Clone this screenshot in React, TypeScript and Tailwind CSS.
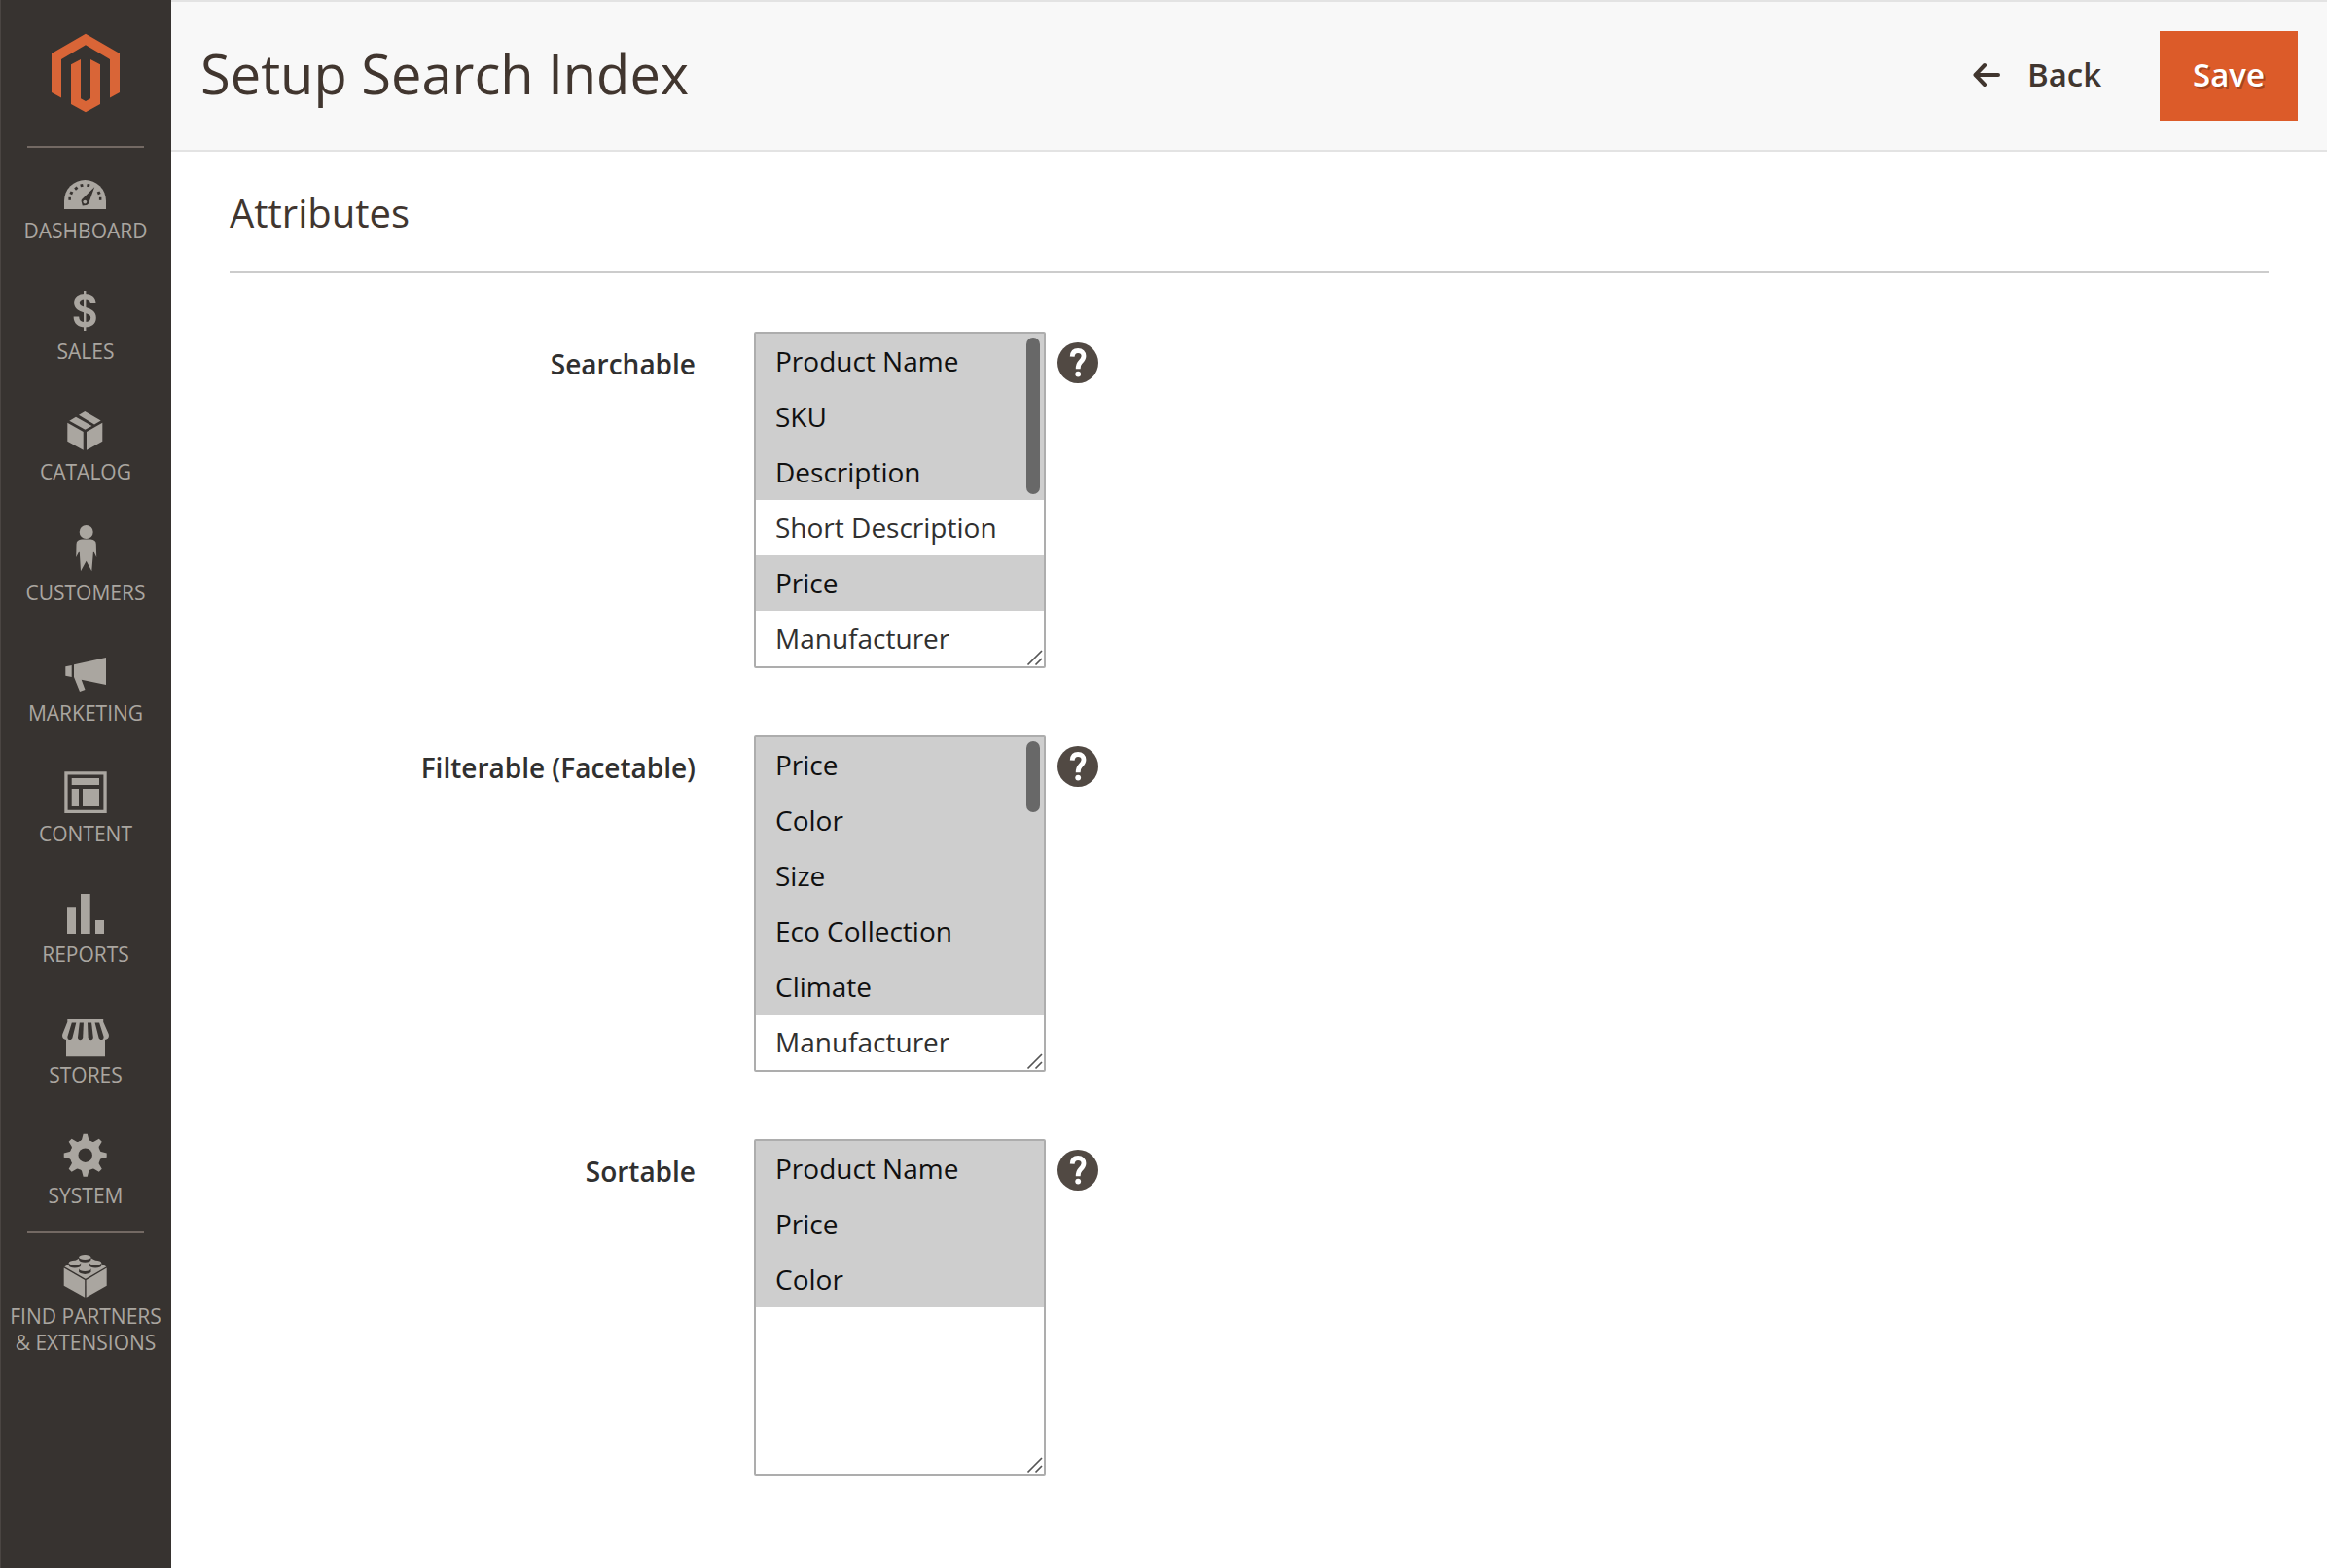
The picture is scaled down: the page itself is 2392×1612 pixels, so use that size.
import React from "react";

type IconProps = { children: React.ReactNode };

function Glyph({ children }: IconProps) {
  return (
    <svg viewBox="0 0 48 52" className="h-[52px] w-12 shrink-0 fill-current" aria-hidden="true">
      {children}
    </svg>
  );
}

const DARK = "#373330";

const dashboardIcon = (
  <Glyph>
    <path d="M2 47V38.5a21.5 21.5 0 0 1 43 0V47z" />
    <g fill={DARK}>
      <path d="M6.4 34.8h2.5v3h-2.5z" />
      <path d="M8.6 28.4l2.7 1.2-1.2 2.6-2.7-1.2z" />
      <path d="M14.6 23.6l1.8 2.2-2.4 1.9-1.8-2.2z" />
      <path d="M18.3 21.6l2.8-.6.6 2.7-2.8.6z" />
      <path d="M25.7 21l2.8.6-.6 2.7-2.8-.6z" />
      <path d="M38.4 28.4l-2.7 1.2 1.2 2.6 2.7-1.2z" />
      <path d="M37.9 34.8h2.5v3h-2.5z" />
      <path d="M33.2 24.2L20.6 36.4c-1.2 1.2-1.2 2.2-.8 3.4l1 3.6 3.6-.4c1.4-.2 2.2-.8 2.8-2.2z" />
    </g>
    <circle cx="23.3" cy="39.6" r="1.9" />
  </Glyph>
);

const salesIcon = (
  <Glyph>
    <path d="M22 7h2.4v41H22z" />
    <path
      d="M31.7 20c0-5-3.4-7.3-8.5-7.3s-8.3 2.6-8.3 6.6c0 4.7 3.8 6 8.4 7.4 5 1.5 8.7 3.1 8.7 8 0 4.6-3.7 7.1-8.7 7.1-5.3 0-8.9-2.8-8.9-8.3"
      fill="none"
      stroke="currentColor"
      strokeWidth="5.6"
    />
  </Glyph>
);

const catalogIcon = (
  <Glyph>
    <path d="M5.3 18.7l16.4 9.3v18.7L5.3 37.7z" />
    <path d="M41.3 18.7L25 28v18.7l16.3-9z" />
    <path d="M7.3 16.7l6.7-4 16.5 9.2-7 3.9z" />
    <path d="M17 10.8L23.3 7l16.4 9.6-6.7 3.8z" />
  </Glyph>
);

const customersIcon = (
  <Glyph>
    <circle cx="24.7" cy="7" r="7" />
    <path d="M14.2 33l.3-13.5q.2-4.6 5.5-4.9h9.3q5.3.3 5.5 4.9L35.2 33 32 26.3l-1.7 21-5.6-10.6L19 47.3l-1.3-21z" />
  </Glyph>
);

const marketingIcon = (
  <Glyph>
    <path d="M3.3 21.3L9.7 20v12l-6.4-1.3z" />
    <path d="M12 19.3L45 12v28l-25.3-5.3L23.5 45 18 47l-6-15z" />
  </Glyph>
);

const contentIcon = (
  <Glyph>
    <path fillRule="evenodd" d="M2.3 5.2h43.4V48H2.3zM5.6 8.4v36.4h36.8V8.4z" />
    <path d="M9.7 12H38v7H9.7zM9.7 23H17v18H9.7zM21 23h17v18H21z" />
  </Glyph>
);

const reportsIcon = (
  <Glyph>
    <path d="M5 20.3h9V48H5zM19 7h9.7v41H19zM34 34h9v14h-9z" />
  </Glyph>
);

const storesIcon = (
  <Glyph>
    <path d="M5.3 12h36.9v2.8l5.5 12.5c.9 3.5-.7 5.5-3.7 5.8v17.2H4V33.1c-3-.3-4.6-2.3-3.7-5.8l5-12.5z" />
    <g fill={DARK}>
      <path d="M9.800 15.600h4.500L10.700 30c-.6 4.500-5.800 3.800-5.300 0z" />
      <path d="M17.800 15.600h4.100L21.200 30.500c-.3 3.700-5.400 3.700-5.200 0z" />
      <path d="M26 15.600h4.100L31.800 30.500c.2 3.700-4.900 3.700-5.200 0z" />
      <path d="M33.600 15.600h4.500L42.600 30c.5 3.800-4.700 4.500-5.300 0z" />
    </g>
  </Glyph>
);

const systemIcon = (
  <Glyph>
    <circle cx="23.7" cy="27.7" r="15.8" />
    {[0, 45, 90, 135, 180, 225, 270, 315].map((angle) => (
      <path
        key={angle}
        d="M21.600 5.700h4.200l1.500 5.800q.6 2 3.100 2.400H17q2.500-.4 3.100-2.400z"
        transform={`rotate(${angle} 23.7 27.7)`}
      />
    ))}
    <circle cx="23.7" cy="27.7" r="7.2" fill={DARK} />
  </Glyph>
);

const partnersIcon = (
  <Glyph>
    <path d="M1.7 19.6l21.5 12.3v17.8L1.7 37.7z" />
    <path d="M45.7 19.6L24.6 31.9v17.8l21.1-12z" />
    <path d="M2.3 18.2L23.7 6l21.7 12.2-21.5 12.5z" />
    {[
      [23.3, 8.4],
      [12.9, 14.3],
      [34.1, 14.3],
      [23.3, 20.6],
    ].map(([x, y]) => (
      <g key={`${x}-${y}`}>
        <path d={`M${x - 6.2} ${y}v2.6a6.2 2.7 0 0 0 12.4 0V${y}z`} fill={DARK} />
        <ellipse cx={x} cy={y} rx="6.1" ry="2.5" />
      </g>
    ))}
  </Glyph>
);

const NAV = [
  { label: "Dashboard", icon: dashboardIcon },
  { label: "Sales", icon: salesIcon },
  { label: "Catalog", icon: catalogIcon },
  { label: "Customers", icon: customersIcon },
  { label: "Marketing", icon: marketingIcon },
  { label: "Content", icon: contentIcon },
  { label: "Reports", icon: reportsIcon },
  { label: "Stores", icon: storesIcon },
  { label: "System", icon: systemIcon },
  { label: "Find Partners & Extensions", icon: partnersIcon },
];

function Sidebar() {
  return (
    <nav className="flex w-44 shrink-0 flex-col border-l border-[#4a4542] bg-[#373330]">
      <a href="#home" aria-label="Magento Admin" className="flex h-[150px] justify-center pt-[34px] pr-px">
        <svg viewBox="0 0 72 82" className="h-[82px] w-[72px] fill-[#d96537]" aria-hidden="true">
          <path d="M36 .8L71 21v40l-10 5.4V27L36 12.2 11 27v39.4L1 61V21z" />
          <path d="M31 27L21 32.3V73l15 8.2L51 73V32.3L41 27v40.2L36 70l-5-2.800z" />
        </svg>
      </a>
      <hr className="mr-7 ml-[27px] border-t-2 border-[#736963]" />
      <ul>
        {NAV.map(({ label, icon }) => (
          <li key={label}>
            <a
              href="#nav"
              className="flex min-h-[122px] flex-col items-center gap-1 pt-4 pr-px text-center text-[21px] leading-[27px] text-[#aaa6a0] uppercase"
            >
              {icon}
              <span>
                {label === "Find Partners & Extensions" ? (
                  <>
                    Find Partners
                    <br />& Extensions
                  </>
                ) : (
                  label
                )}
              </span>
            </a>
            {label === "System" ? (
              <hr className="mr-7 ml-[27px] border-t-2 border-[#736963]" />
            ) : (
              <div className="h-0.5" />
            )}
          </li>
        ))}
      </ul>
    </nav>
  );
}

type Field = {
  id: string;
  label: string;
  options: string[];
  selected: string[];
  thumb?: string;
};

const FIELDS: Field[] = [
  {
    id: "searchable",
    label: "Searchable",
    options: ["Product Name", "SKU", "Description", "Short Description", "Price", "Manufacturer"],
    selected: ["Product Name", "SKU", "Description", "Price"],
    thumb: "h-[161px]",
  },
  {
    id: "filterable",
    label: "Filterable (Facetable)",
    options: ["Price", "Color", "Size", "Eco Collection", "Climate", "Manufacturer"],
    selected: ["Price", "Color", "Size", "Eco Collection", "Climate"],
    thumb: "h-[73px]",
  },
  {
    id: "sortable",
    label: "Sortable",
    options: ["Product Name", "Price", "Color"],
    selected: ["Product Name", "Price", "Color"],
  },
];

function AttributeField({ id, label, options, selected, thumb }: Field) {
  return (
    <div className="flex items-start">
      <label
        htmlFor={id}
        className="mr-[60px] w-[479px] shrink-0 pt-[13px] text-right text-[28px] leading-[40px] font-semibold text-[#303030]"
      >
        {label}
      </label>
      <div className="relative w-[300px] shrink-0">
        <select
          id={id}
          multiple
          size={6}
          defaultValue={selected}
          className="block h-[346px] w-full overflow-hidden rounded-[2px] border-2 border-[#adadad] bg-white p-0 text-[28px] text-[#303030] [scrollbar-width:none]"
        >
          {options.map((option) => (
            <option
              key={option}
              value={option}
              className="block h-[57px] px-5 py-[9px] leading-[39px] checked:bg-[#cecece] checked:text-[#101010]"
            >
              {option}
            </option>
          ))}
        </select>
        {thumb && (
          <div
            className={`pointer-events-none absolute top-1.5 right-1.5 w-3.5 rounded-full bg-[#686868] ${thumb}`}
          />
        )}
        <svg
          viewBox="0 0 18 18"
          className="pointer-events-none absolute right-0.5 bottom-0.5 size-[18px]"
          aria-hidden="true"
        >
          <path d="M1.500 16.500L16 2M9.500 16.500l6.500-6.500" stroke="#555" strokeWidth="1.700" fill="none" />
        </svg>
      </div>
      <button type="button" aria-label={`${label} help`} className="mt-[11px] ml-3">
        <svg viewBox="0 0 42 42" className="size-[42px]" aria-hidden="true">
          <circle cx="21" cy="21" r="21" fill="#514943" />
          <path
            d="M15.200 14.600c.3-4.200 2.600-6.100 5.900-6.100 3.600 0 5.900 2.300 5.900 5.600 0 3-1.600 4.500-3.400 6.200-1.800 1.700-2.400 3-2.400 7"
            fill="none"
            stroke="#fff"
            strokeWidth="4.800"
          />
          <circle cx="21.200" cy="32.600" r="2.900" fill="#fff" />
        </svg>
      </button>
    </div>
  );
}

export default function App() {
  return (
    <div className="flex min-h-screen bg-white font-['Open_Sans',sans-serif]">
      <Sidebar />
      <div className="flex min-w-0 flex-1 flex-col">
        <header className="flex items-start justify-between border-y-2 border-[#e3e3e3] bg-[#f8f8f8] px-[30px] py-[30px]">
          <h1 className="pt-1 text-[56px] leading-[78px] text-[#41362f]">Setup Search Index</h1>
          <div className="flex items-center gap-[60px]">
            <button
              type="button"
              className="flex items-center gap-7 pt-[23px] pb-[25px] text-[33px] leading-[44px] font-semibold text-[#41362f]"
            >
              <svg viewBox="0 0 28 26" className="h-[26px] w-7" aria-hidden="true">
                <path
                  d="M12 3L2.500 13l9.500 10M3 13h23"
                  fill="none"
                  stroke="currentColor"
                  strokeWidth="4"
                  strokeLinecap="round"
                  strokeLinejoin="round"
                />
              </svg>
              Back
            </button>
            <button
              type="button"
              className="bg-[#dc5b29] px-[34px] pt-[23px] pb-[25px] text-[33px] leading-[44px] font-semibold text-white [text-shadow:2px_2px_0_rgba(0,0,0,0.25)]"
            >
              Save
            </button>
          </div>
        </header>
        <main className="px-[60px] pt-9">
          <h2 className="border-b-2 border-[#ccc] pb-[33px] text-[40px] leading-[54px] text-[#41362f]">
            Attributes
          </h2>
          <form className="flex flex-col gap-[69px] pt-[60px] pb-12">
            {FIELDS.map((field) => (
              <AttributeField key={field.id} {...field} />
            ))}
          </form>
        </main>
      </div>
    </div>
  );
}
